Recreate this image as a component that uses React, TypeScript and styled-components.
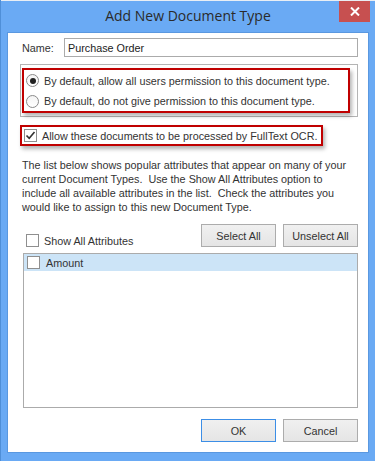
import React from "react";
import styled, { createGlobalStyle } from "styled-components";

const Global = createGlobalStyle`
  html, body { margin: 0; padding: 0; }
  body { background: #6aaaf4; font-family: "Liberation Sans", Arial, sans-serif; }
  * { box-sizing: border-box; }
`;

const Window = styled.div`
  width: 375px;
  height: 461px;
  background: #6aaaf4;
  display: flex;
  flex-direction: column;
  border-left: 1px solid #4f8fd8;
`;

const TopStrip = styled.div`
  height: 1px;
  background: #e9eef4;
  flex: none;
`;

const TitleBar = styled.div`
  height: 31px;
  display: grid;
  grid-template-columns: 1fr auto 1fr;
  align-items: start;
  flex: none;
`;

const Title = styled.div`
  grid-column: 2;
  margin-top: 5px;
  font-family: "Open Sans", "Liberation Sans", sans-serif;
  font-size: 14px;
  color: #2a2a2a;
`;

const CloseButton = styled.div`
  grid-column: 3;
  justify-self: end;
  width: 31px;
  height: 21px;
  margin-right: 5px;
  background: #c75050;
  display: flex;
  align-items: center;
  justify-content: center;
`;

const Content = styled.div`
  margin: 0 6px 0 6px;
  height: 421px;
  background: #ffffff;
  border: 1px solid #5a98e0;
  padding: 5px 10px 0 12px;
  display: flex;
  flex-direction: column;
  font-size: 10.8px;
  color: #333333;
`;

const NameRow = styled.div`
  display: flex;
  align-items: center;
  height: 19px;
`;

const Label = styled.span`
  padding-left: 2px;
  width: 44px;
`;

const TextInput = styled.div`
  flex: 1;
  height: 19px;
  border: 1px solid #ababab;
  padding: 0 3px;
  display: flex;
  align-items: center;
  color: #222;
`;

const GroupBox = styled.div`
  margin-top: 7px;
  height: 53px;
  border: 1px solid #b4b4b4;
  padding: 3px 7px 0 1px;
`;

const Highlight = styled.div<{ $fit?: boolean }>`
  border: 2px solid #c00000;
  box-shadow: 2px 3px 4px rgba(0, 0, 0, 0.3);
  display: ${(p) => (p.$fit ? "inline-flex" : "flex")};
  flex-direction: column;
  align-self: ${(p) => (p.$fit ? "flex-start" : "stretch")};
`;

const OptionRow = styled.label<{ $h: number }>`
  height: ${(p) => p.$h}px;
  display: flex;
  align-items: center;
  padding-left: 2px;
  padding-right: 4px;
  gap: 5px;
  white-space: nowrap;
`;

const Radio = styled.span<{ $on?: boolean }>`
  width: 13px;
  height: 13px;
  border-radius: 50%;
  border: 1px solid #8a8a8a;
  background: linear-gradient(#f4f4f4, #ffffff);
  display: flex;
  align-items: center;
  justify-content: center;
  flex: none;
  &::after {
    content: "";
    width: 6px;
    height: 6px;
    border-radius: 50%;
    background: ${(p) => (p.$on ? "#222" : "transparent")};
  }
`;

const Check = styled.span`
  width: 13px;
  height: 13px;
  border: 1px solid #8f8f8f;
  background: #fff;
  flex: none;
  display: flex;
  align-items: center;
  justify-content: center;
`;

const OcrWrap = styled.div`
  margin-top: 8px;
  display: flex;
`;

const Paragraph = styled.p`
  margin: 12px 0 0 2px;
  line-height: 14px;
  width: 335px;
`;

const AttrBar = styled.div`
  margin-top: 10px;
  display: flex;
  align-items: flex-end;
  gap: 7px;
`;

const ShowAll = styled.label`
  flex: 1;
  display: flex;
  align-items: center;
  gap: 5px;
  padding-left: 6px;
  margin-bottom: -2px;
  height: 17px;
`;

const Button = styled.button<{ $primary?: boolean }>`
  width: 75px;
  height: 23px;
  font-family: inherit;
  font-size: 10.8px;
  color: #333;
  border: 1px solid ${(p) => (p.$primary ? "#3c8ee6" : "#acacac")};
  background: linear-gradient(#f0f0f0, #e5e5e5);
  padding: 0;
`;

const List = styled.div`
  margin: 6px 0 0 3px;
  height: 155px;
  border: 1px solid #ababab;
  display: flex;
  flex-direction: column;
`;

const ListItem = styled.div<{ $selected?: boolean }>`
  height: 17px;
  background: ${(p) => (p.$selected ? "#cce4f7" : "transparent")};
  display: flex;
  align-items: center;
  gap: 6px;
  padding-left: 3px;
`;

const Footer = styled.div`
  margin-top: 11px;
  display: flex;
  justify-content: flex-end;
  gap: 7px;
`;

export default function App() {
  return (
    <>
      <Global />
      <Window>
        <TopStrip />
        <TitleBar>
          <Title>Add New Document Type</Title>
          <CloseButton>
            <svg width="10" height="9" viewBox="0 0 10 9">
              <path d="M1 0.5 L9 8.5 M9 0.5 L1 8.5" stroke="#fff" strokeWidth="2" />
            </svg>
          </CloseButton>
        </TitleBar>
        <Content>
          <NameRow>
            <Label>Name:</Label>
            <TextInput>Purchase Order</TextInput>
          </NameRow>
          <GroupBox>
            <Highlight>
              <OptionRow $h={21}>
                <Radio $on />
                By default, allow all users permission to this document type.
              </OptionRow>
              <OptionRow $h={20}>
                <Radio />
                By default, do not give permission to this document type.
              </OptionRow>
            </Highlight>
          </GroupBox>
          <OcrWrap>
            <Highlight $fit>
              <OptionRow $h={17}>
                <Check>
                  <svg width="11" height="11" viewBox="0 0 11 11">
                    <path d="M1.5 5.5 L4.2 8.3 L9.5 2" stroke="#333" strokeWidth="1.6" fill="none" />
                  </svg>
                </Check>
                Allow these documents to be processed by FullText OCR.
              </OptionRow>
            </Highlight>
          </OcrWrap>
          <Paragraph>
            The list below shows popular attributes that appear on many of your current
            Document Types.&nbsp; Use the Show All Attributes option to include all available
            attributes in the list.&nbsp; Check the attributes you would like to assign to this
            new Document Type.
          </Paragraph>
          <AttrBar>
            <ShowAll>
              <Check />
              Show All Attributes
            </ShowAll>
            <Button>Select All</Button>
            <Button>Unselect All</Button>
          </AttrBar>
          <List>
            <ListItem $selected>
              <Check />
              Amount
            </ListItem>
          </List>
          <Footer>
            <Button $primary>OK</Button>
            <Button>Cancel</Button>
          </Footer>
        </Content>
      </Window>
    </>
  );
}
